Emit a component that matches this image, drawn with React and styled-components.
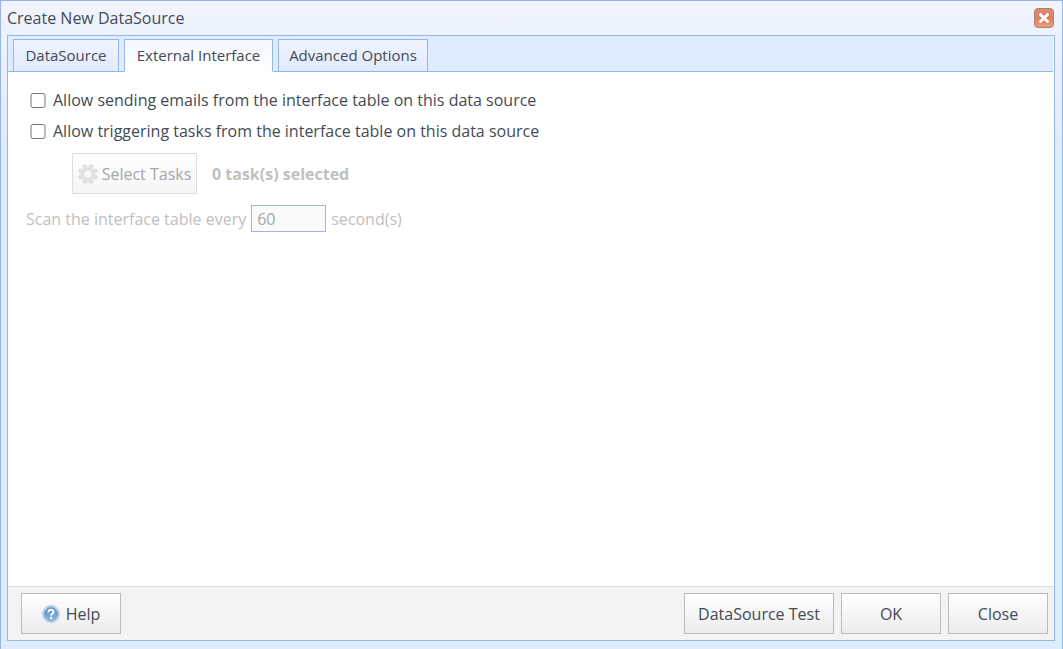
import React, { useState } from 'react';
import styled, { createGlobalStyle } from 'styled-components';

const TABS = [
  { label: 'DataSource', width: 106 },
  { label: 'External Interface', width: 149 },
  { label: 'Advanced Options', width: 150 },
];

function CloseIcon() {
  return (
    <svg width="20" height="20" viewBox="0 0 20 20" aria-hidden="true">
      <defs>
        <linearGradient id="closeFill" x1="0" y1="0" x2="0" y2="1">
          <stop offset="0" stopColor="#dc8f76" />
          <stop offset="0.5" stopColor="#e0805f" />
          <stop offset="1" stopColor="#eaa07c" />
        </linearGradient>
      </defs>
      <rect x="0.5" y="0.5" width="19" height="19" rx="3.5" fill="url(#closeFill)" stroke="#a98275" />
      <path d="M6 6.2L14 14.2M14 6.2L6 14.2" stroke="#b76b52" strokeWidth="5" opacity="0.4" />
      <path d="M5.7 5.7L14.3 14.3M14.3 5.7L5.7 14.3" stroke="#fff" strokeWidth="3" />
    </svg>
  );
}

function GearIcon() {
  return (
    <svg width="20" height="20" viewBox="0 0 20 20" aria-hidden="true">
      <defs>
        <radialGradient id="gearFill">
          <stop offset="0" stopColor="#f8f8f8" />
          <stop offset="1" stopColor="#ececec" />
        </radialGradient>
      </defs>
      <g fill="#dcdcdc">
        {[22.5, 67.5, 112.5, 157.5].map((deg) => (
          <rect key={deg} x="7.8" y="0" width="4.4" height="20" rx="1" transform={`rotate(${deg} 10 10)`} />
        ))}
      </g>
      <circle cx="10" cy="10" r="8" fill="#e6e6e6" />
      <circle cx="10" cy="10" r="5.2" fill="url(#gearFill)" stroke="#d6d6d6" strokeWidth="1.2" />
    </svg>
  );
}

function HelpIcon() {
  return (
    <svg width="18" height="18" viewBox="0 0 18 18" aria-hidden="true">
      <defs>
        <linearGradient id="helpFill" x1="0" y1="0" x2="0" y2="1">
          <stop offset="0" stopColor="#5a8cc6" />
          <stop offset="1" stopColor="#8ab8e4" />
        </linearGradient>
      </defs>
      <circle cx="9" cy="9" r="8.4" fill="#c5daf0" stroke="#9dbcdd" strokeWidth="0.8" />
      <circle cx="9" cy="9" r="6.5" fill="url(#helpFill)" stroke="#6795c8" strokeWidth="0.8" />
      <path d="M6.5 7.2C6.5 4 11.6 4.1 11.6 7C11.6 8.7 9.1 8.6 9.1 10.5" fill="none" stroke="#fff" strokeWidth="2" />
      <circle cx="9.1" cy="13" r="1.2" fill="#fff" />
    </svg>
  );
}

export default function App() {
  const [active, setActive] = useState(1);

  return (
    <>
      <GlobalStyle />
      <Dialog role="dialog" aria-labelledby="dialog-title">
        <Header>
          <Title id="dialog-title">Create New DataSource</Title>
          <CloseButton type="button" aria-label="Close window">
            <CloseIcon />
          </CloseButton>
        </Header>
        <Panel>
          <TabBar role="tablist">
            {TABS.map((tab, i) => (
              <Tab
                key={tab.label}
                type="button"
                role="tab"
                aria-selected={i === active}
                $active={i === active}
                $width={tab.width}
                onClick={() => setActive(i)}
              >
                {tab.label}
              </Tab>
            ))}
          </TabBar>
          <Content role="tabpanel">
            <CheckRow>
              <input type="checkbox" />
              Allow sending emails from the interface table on this data source
            </CheckRow>
            <CheckRow>
              <input type="checkbox" />
              Allow triggering tasks from the interface table on this data source
            </CheckRow>
            <TaskRow>
              <TaskButton type="button" disabled>
                <GearIcon />
                Select Tasks
              </TaskButton>
              <strong>0 task(s) selected</strong>
            </TaskRow>
            <ScanRow>
              <label htmlFor="scan">Scan the interface table every</label>
              <ScanInput id="scan" type="text" defaultValue="60" disabled />
              <span>second(s)</span>
            </ScanRow>
          </Content>
          <Footer>
            <Button type="button">
              <HelpIcon />
              Help
            </Button>
            <Actions>
              <Button type="button" $wide>DataSource Test</Button>
              <Button type="button">OK</Button>
              <Button type="button">Close</Button>
            </Actions>
          </Footer>
        </Panel>
      </Dialog>
    </>
  );
}

const GlobalStyle = createGlobalStyle`
  * {
    box-sizing: border-box;
  }

  body {
    margin: 0;
    color: #444b54;
    font: 16px/20px "Open Sans", sans-serif;
  }

  button, input {
    font: inherit;
    color: inherit;
  }

  svg {
    display: block;
    flex: none;
  }
`;

const Dialog = styled.div`
  display: flex;
  flex-direction: column;
  min-height: 100vh;
  padding: 0 7px 8px 6px;
  border: 1px solid #94b6e8;
  border-bottom: 0;
  background: linear-gradient(#f0f4ff, #dfebff 160px);
`;

const Header = styled.header`
  display: flex;
  align-items: center;
  justify-content: space-between;
  height: 34px;
  padding-right: 1px;
`;

const Title = styled.h1`
  margin: 0;
  font-size: 16px;
  font-weight: 400;
`;

const CloseButton = styled.button`
  padding: 0;
  border: 0;
  background: none;
`;

const Panel = styled.div`
  display: flex;
  flex: 1;
  flex-direction: column;
  border: 1px solid #94b6e8;
  background: #fff;
`;

const TabBar = styled.div`
  display: flex;
  gap: 5px;
  height: 36px;
  margin-right: 1px;
  padding: 3px 5px 0;
  border-bottom: 1px solid #94b6e8;
  background: #dfebff;
`;

const Tab = styled.button`
  width: ${(props) => props.$width}px;
  height: 33px;
  padding: 0 0 2px;
  border: 1px solid #94b6e8;
  border-bottom-color: ${(props) => (props.$active ? '#fff' : '#94b6e8')};
  background: ${(props) => (props.$active ? 'linear-gradient(#f4f7ff, #fff)' : 'linear-gradient(#f0f4ff, #dfebff)')};
  font-size: 15px;
  white-space: nowrap;
`;

const Content = styled.div`
  flex: 1;
  padding: 18px;
`;

const CheckRow = styled.label`
  display: flex;
  align-items: center;
  gap: 7px;
  width: max-content;
  margin: 0 0 10px 4px;
  line-height: 21px;

  input {
    width: 16px;
    height: 15px;
    margin: 0;
  }
`;

const TaskRow = styled.div`
  display: flex;
  align-items: center;
  gap: 15px;
  padding: 1px 0 0 46px;
  color: #c0c0c0;
`;

const Button = styled.button`
  display: flex;
  align-items: center;
  justify-content: center;
  gap: 6px;
  width: ${(props) => (props.$wide ? '150px' : '100px')};
  height: 41px;
  padding: 0;
  border: 1px solid #bbb;
  background: linear-gradient(#fff, #ececec);
`;

const TaskButton = styled(Button)`
  width: 125px;
  gap: 4px;
  border-color: #ddd;
  background: linear-gradient(#fff, #f5f5f5);
  color: #a5a7a9;
`;

const ScanRow = styled.div`
  display: flex;
  align-items: center;
  gap: 5px;
  margin-top: 11px;
  color: #c0c0c0;
`;

const ScanInput = styled.input`
  width: 75px;
  height: 27px;
  padding: 0 5px;
  border: 1px solid #a0b6dc;
  background: #fafafa;
  color: #a5a7a9;
`;

const Footer = styled.footer`
  display: flex;
  justify-content: space-between;
  padding: 6px 6px 6px 13px;
  border-top: 1px solid #ddd;
  background: #f3f3f3;
`;

const Actions = styled.div`
  display: flex;
  gap: 7px;
`;
